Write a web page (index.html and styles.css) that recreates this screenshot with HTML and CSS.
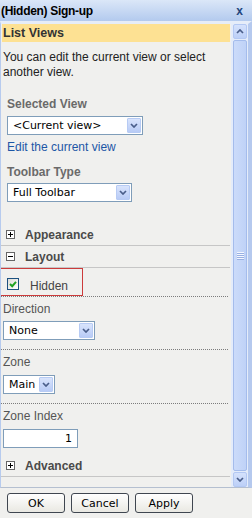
FILE: index.html
```html
<!DOCTYPE html>
<html>
<head>
    <meta charset="UTF-8">
    <title>(Hidden) Sign-up</title>
    <link rel="stylesheet" href="styles.css">
</head>
<body>
<div id="pane">
    <div class="title">
        <span class="name">(Hidden) Sign-up</span>
        <span class="close">x</span>
    </div>
    <div class="frame">
        <div class="content">
            <div class="head">List Views</div>
            <p class="desc">You can edit the current view or select another view.</p>

            <div class="field">
                <div class="label">Selected View</div>
                <div class="select sel-view"><span class="val">&lt;Current view&gt;</span><span class="arrow"><svg width="8" height="5" viewBox="0 0 8 5"><path d="M1 1L4 4L7 1" fill="none" stroke="#4a5e8a" stroke-width="1.7"/></svg></span></div>
                <a class="link" href="#">Edit the current view</a>
                <div class="label label-gap">Toolbar Type</div>
                <div class="select sel-toolbar"><span class="val">Full Toolbar</span><span class="arrow"><svg width="8" height="5" viewBox="0 0 8 5"><path d="M1 1L4 4L7 1" fill="none" stroke="#4a5e8a" stroke-width="1.7"/></svg></span></div>
            </div>

            <!-- 折叠分组 -->
            <div class="group first">
                <svg class="pm" width="9" height="9" viewBox="0 0 9 9"><rect x="0.5" y="0.5" width="8" height="8" fill="#fff" stroke="#666"/><path d="M2 4.5h5M4.5 2v5" stroke="#000"/></svg>
                <span>Appearance</span>
            </div>
            <div class="group">
                <svg class="pm" width="9" height="9" viewBox="0 0 9 9"><rect x="0.5" y="0.5" width="8" height="8" fill="#fff" stroke="#666"/><path d="M2 4.5h5" stroke="#000"/></svg>
                <span>Layout</span>
            </div>

            <div class="layout">
                <div class="prop hidden-row">
                    <label class="hidden-box">
                        <span class="check"><svg width="10" height="10" viewBox="0 0 10 10"><path d="M2 5L4.2 7.2L8 2.8" fill="none" stroke="#21a121" stroke-width="2"/></svg></span>
                        <span class="check-text">Hidden</span>
                    </label>
                </div>
                <div class="prop">
                    <div class="plabel">Direction</div>
                    <div class="select sel-dir"><span class="val">None</span><span class="arrow"><svg width="8" height="5" viewBox="0 0 8 5"><path d="M1 1L4 4L7 1" fill="none" stroke="#4a5e8a" stroke-width="1.7"/></svg></span></div>
                </div>
                <div class="prop">
                    <div class="plabel">Zone</div>
                    <div class="select sel-zone"><span class="val">Main</span><span class="arrow"><svg width="8" height="5" viewBox="0 0 8 5"><path d="M1 1L4 4L7 1" fill="none" stroke="#4a5e8a" stroke-width="1.7"/></svg></span></div>
                </div>
                <div class="prop last">
                    <div class="plabel">Zone Index</div>
                    <div class="input">1</div>
                </div>
            </div>

            <div class="group">
                <svg class="pm" width="9" height="9" viewBox="0 0 9 9"><rect x="0.5" y="0.5" width="8" height="8" fill="#fff" stroke="#666"/><path d="M2 4.5h5M4.5 2v5" stroke="#000"/></svg>
                <span>Advanced</span>
            </div>
        </div>

        <div class="scrollbar">
            <div class="sbtn"><svg width="8" height="5" viewBox="0 0 8 5"><path d="M1 4L4 1L7 4" fill="none" stroke="#4a5e8a" stroke-width="1.7"/></svg></div>
            <div class="thumb">
                <svg width="7" height="8" viewBox="0 0 7 8"><path d="M0 .5h7M0 2.5h7M0 4.5h7M0 6.5h7" stroke="#f4f7ff"/><path d="M0 1.5h7M0 3.5h7M0 5.5h7M0 7.5h7" stroke="#98b0e2"/></svg>
            </div>
            <div class="sbtn"><svg width="8" height="5" viewBox="0 0 8 5"><path d="M1 1L4 4L7 1" fill="none" stroke="#4a5e8a" stroke-width="1.7"/></svg></div>
        </div>
    </div>

    <div class="buttons">
        <button>OK</button>
        <button>Cancel</button>
        <button>Apply</button>
    </div>
</div>
</body>
</html>
```

FILE: styles.css
```css
* {
    margin: 0;
    padding: 0;
    box-sizing: border-box;
}

body {
    font-family: "Liberation Sans", Arial, sans-serif;
    font-size: 12px;
    color: #222;
    background-color: #f0f0ee;
}
#pane{
    width: 252px;
    height: 518px;
    background-color: #f0f0ee;
}
#pane .title{
    display: flex;
    justify-content: space-between;
    align-items: center;
    height: 21px;
    padding: 0 9px 0 1px;
    background: linear-gradient(#dbe7f8, #b3caee);
    font-weight: bold;
    letter-spacing: -0.3px;
    color: #000;
}
#pane .title .close{
    color: #23457c;
    letter-spacing: 0;
}
#pane .frame{
    display: flex;
    height: 467px;
    border-top: 3px solid #e6edf9;
    border-left: 1px solid #b7cbee;
    border-right: 4px solid #b5c9ee;
    border-bottom: 1px solid #b4bfd0;
}
#pane .content{
    flex: 1;
    overflow: hidden;
}
#pane .head{
    height: 18px;
    margin: 0 1px;
    padding-left: 1px;
    line-height: 18px;
    font-size: 12.5px;
    font-weight: bold;
    color: #333;
    background-color: #fde193;
}
#pane .desc{
    margin-top: 8px;
    padding: 0 12px 0 2px;
    line-height: 15px;
}
#pane .field{
    padding-left: 6px;
}
#pane .label{
    margin-top: 17px;
    line-height: 15px;
    font-weight: bold;
    color: #6a6a6a;
}
#pane .label-gap{
    margin-top: 10px;
}
#pane .select{
    display: flex;
    justify-content: space-between;
    align-items: center;
    height: 19px;
    margin-top: 4px;
    border: 1px solid #7f9db9;
    background-color: #fff;
    font-family: "DejaVu Sans", Verdana, sans-serif;
    font-size: 11px;
    color: #000;
}
#pane .select .val{
    padding-left: 5px;
}
#pane .select .arrow{
    display: flex;
    justify-content: center;
    align-items: center;
    width: 14px;
    height: 15px;
    margin-right: 1px;
    border: 1px solid #b7cbf4;
    border-radius: 1px;
    background: linear-gradient(#d9e4fc, #b8cbf6);
}
#pane .sel-view{
    width: 136px;
}
#pane .sel-toolbar{
    width: 125px;
    margin-top: 3px;
}
#pane .sel-dir{
    width: 92px;
    margin-top: 4px;
}
#pane .sel-zone{
    width: 52px;
    margin-top: 5px;
}
#pane .link{
    display: block;
    margin-top: 5px;
    line-height: 15px;
    color: #1d57a6;
    text-decoration: none;
}
#pane .group{
    display: flex;
    align-items: center;
    height: 22px;
    margin-right: 1px;
    padding-left: 5px;
    border-bottom: 1px solid #c6c6c6;
    font-weight: bold;
    color: #4a4a4a;
}
#pane .group.first{
    margin-top: 22px;
}
#pane .group .pm{
    margin-right: 10px;
}
#pane .layout{
    margin-left: -1px;
    margin-bottom: 7px;
}
#pane .prop{
    margin-right: 3px;
    padding-left: 3px;
    padding-bottom: 9px;
    border-bottom: 1px dotted #7c7c7c;
}
#pane .prop.last{
    padding-bottom: 0;
    border-bottom: none;
}
#pane .hidden-row{
    padding: 0;
}
#pane .hidden-box{
    display: flex;
    align-items: center;
    width: 83px;
    height: 28px;
    padding: 4px 0 0 6px;
    border: 1px solid #cc3b3b;
}
#pane .check{
    display: flex;
    justify-content: center;
    align-items: center;
    width: 12px;
    height: 12px;
    border: 1px solid #1c5180;
    background: linear-gradient(135deg, #dcdcd6, #fff);
}
#pane .check-text{
    margin: 3px 0 0 11px;
    color: #444;
}
#pane .plabel{
    padding-top: 5px;
    line-height: 15px;
    color: #555;
}
#pane .input{
    width: 75px;
    height: 19px;
    margin-top: 5px;
    padding-right: 5px;
    border: 1px solid #7f9db9;
    background-color: #fff;
    text-align: right;
    line-height: 17px;
    font-family: "DejaVu Sans", Verdana, sans-serif;
    font-size: 11px;
    color: #000;
}
#pane .scrollbar{
    display: flex;
    flex-direction: column;
    width: 17px;
    padding: 0 1px 0 2px;
    background-color: #e4ecfa;
}
#pane .sbtn{
    display: flex;
    justify-content: center;
    align-items: center;
    height: 15px;
    border: 1px solid #b3c8f3;
    border-radius: 2px;
    background: linear-gradient(#d5e2fc, #bccff7);
}
#pane .thumb{
    display: flex;
    justify-content: center;
    align-items: center;
    flex: 1;
    margin: 1px 0;
    border: 1px solid #a4bcec;
    border-radius: 2px;
    background: linear-gradient(90deg, #cbdbfa, #bfd2f7);
}
#pane .buttons{
    display: flex;
    gap: 6px;
    padding: 5px 0 0 7px;
}
#pane .buttons button{
    width: 58px;
    height: 20px;
    border: 1px solid #3f4650;
    border-radius: 3px;
    background: linear-gradient(#fff, #e9e8e2);
    font-family: "DejaVu Sans", Verdana, sans-serif;
    font-size: 11px;
    color: #000;
}
```
